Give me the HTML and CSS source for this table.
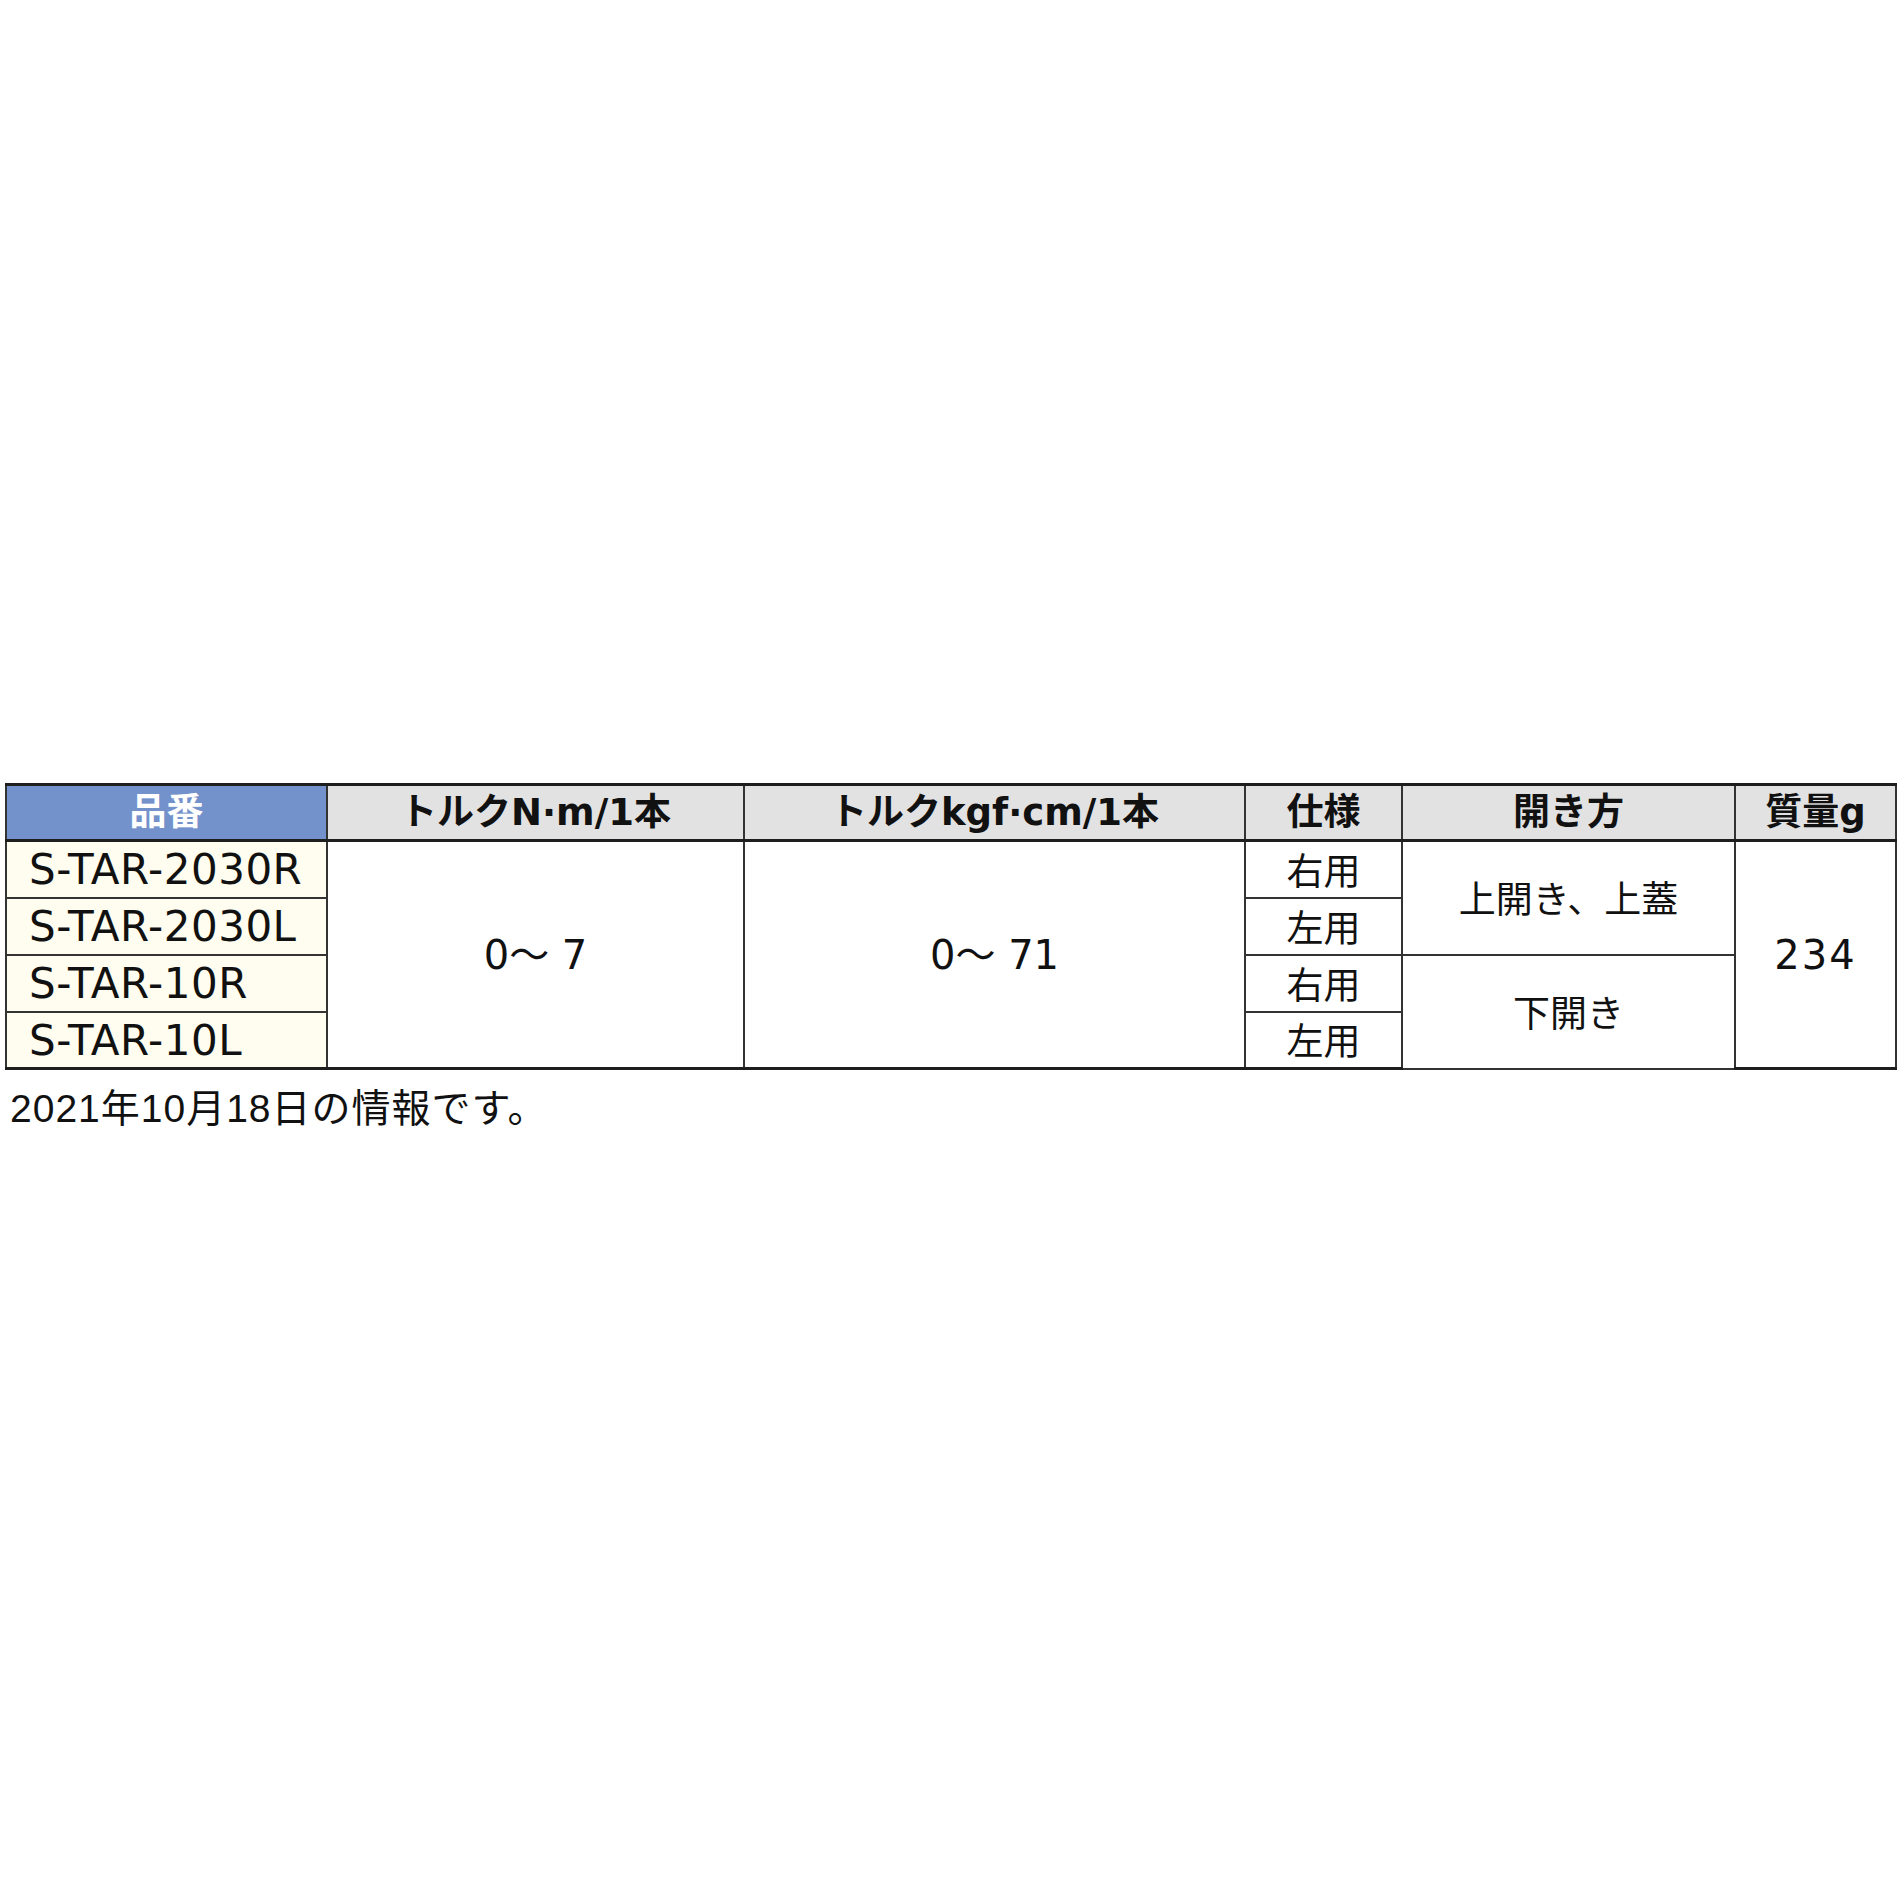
FILE: index.html
```html
<!DOCTYPE html>
<html lang="ja">
<head>
<meta charset="utf-8">
<title>仕様表</title>
<link rel="stylesheet" href="styles.css">
</head>
<body>
<div class="page">
  <table class="spec">
    <colgroup>
      <col class="c-model">
      <col class="c-nm">
      <col class="c-kgf">
      <col class="c-side">
      <col class="c-open">
      <col class="c-mass">
    </colgroup>
    <thead>
      <tr>
        <th class="h-model">品番</th>
        <th>トルクN·m/1本</th>
        <th>トルクkgf·cm/1本</th>
        <th>仕様</th>
        <th>開き方</th>
        <th>質量g</th>
      </tr>
    </thead>
    <tbody>
      <tr>
        <td class="model">S-TAR-2030R</td>
        <td class="num" rowspan="4">0～ 7</td>
        <td class="num" rowspan="4">0～ 71</td>
        <td class="jp">右用</td>
        <td class="jp" rowspan="2">上開き、上蓋</td>
        <td class="num mass" rowspan="4">234</td>
      </tr>
      <tr>
        <td class="model">S-TAR-2030L</td>
        <td class="jp">左用</td>
      </tr>
      <tr>
        <td class="model">S-TAR-10R</td>
        <td class="jp">右用</td>
        <td class="jp" rowspan="2">下開き</td>
      </tr>
      <tr>
        <td class="model">S-TAR-10L</td>
        <td class="jp">左用</td>
      </tr>
    </tbody>
  </table>
  <p class="note">2021年10月18日の情報です。</p>
</div>
</body>
</html>
```

FILE: styles.css
```css
html, body {
  margin: 0;
  padding: 0;
  background: #ffffff;
}

.page {
  padding: 783px 0 0 5px;
  color: #111111;
}

.spec {
  border-collapse: collapse;
  table-layout: fixed;
  width: 1890px;
}

.c-model { width: 321px; }
.c-nm { width: 417px; }
.c-kgf { width: 501px; }
.c-side { width: 157px; }
.c-open { width: 333px; }
.c-mass { width: 161px; }

.spec th,
.spec td {
  border: 2px solid #333333;
  padding: 0;
  text-align: center;
  vertical-align: middle;
  white-space: nowrap;
}

.spec thead tr { height: 56px; }
.spec tbody tr { height: 57px; }

.spec th {
  background: #e2e2e2;
  border-top: 3px solid #1e1e1e;
  border-bottom: 3px solid #1e1e1e;
  font-family: "DejaVu Sans", "Noto Sans CJK JP", sans-serif;
  font-weight: bold;
  font-size: 37px;
  line-height: 1;
  color: #111111;
}

.spec th.h-model {
  background: #7391cb;
  color: #ffffff;
}

.spec td {
  font-family: "DejaVu Sans", "Noto Sans CJK JP", sans-serif;
  font-size: 40px;
  line-height: 1;
  color: #111111;
}

.spec td.model {
  background: #fefdef;
  text-align: left;
  padding-left: 22px;
  padding-top: 2px;
  font-size: 42px;
  letter-spacing: 0.5px;
}

.spec td.mass {
  letter-spacing: 2px;
}

.spec td.jp {
  font-family: "Noto Sans CJK JP", sans-serif;
  font-size: 37px;
}

.spec tbody tr:last-child td {
  border-bottom: 3px solid #1e1e1e;
}

.spec td.num {
  border-bottom: 3px solid #1e1e1e;
}

.note {
  margin: 16px 0 0 5px;
  font-family: "Liberation Sans", "Noto Sans CJK JP", sans-serif;
  font-size: 39px;
  letter-spacing: 1px;
  line-height: 1.2;
  color: #111111;
}
```
